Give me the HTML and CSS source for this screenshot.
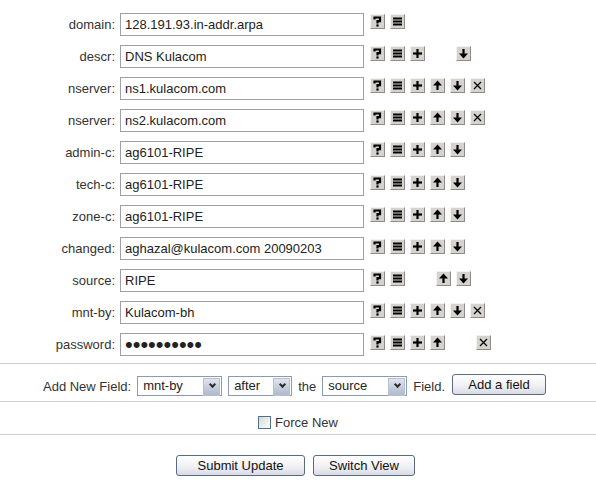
FILE: index.html
```html
<!DOCTYPE html>
<html lang="en">
  <head>
    <meta charset="utf-8" />
    <title>Update object - domain</title>
    <link rel="stylesheet" href="styles.css">
  </head>

  <body>
    <!-- glyphs for the small field buttons -->
    <svg class="defs" width="0" height="0" aria-hidden="true">
      <symbol id="i-help" viewBox="0 0 13 13">
        <path d="M3.5 4.5V2.5H9V6.2H6.5V8.5" fill="none" stroke="#000" stroke-width="2.2" />
        <rect x="5.4" y="9.4" width="2.2" height="2.2" />
      </symbol>
      <symbol id="i-list" viewBox="0 0 13 13">
        <rect x="2" y="2.5" width="9" height="2" />
        <rect x="2" y="5.5" width="9" height="2" />
        <rect x="2" y="8.5" width="9" height="2" />
      </symbol>
      <symbol id="i-add" viewBox="0 0 13 13">
        <rect x="5.4" y="2" width="2.2" height="9" />
        <rect x="2" y="5.4" width="9" height="2.2" />
      </symbol>
      <symbol id="i-up" viewBox="0 0 13 13">
        <polygon points="6.5,1.5 11,6.5 2,6.5" />
        <rect x="5.4" y="6" width="2.2" height="5" />
      </symbol>
      <symbol id="i-down" viewBox="0 0 13 13">
        <rect x="5.4" y="2" width="2.2" height="5" />
        <polygon points="2,6.5 11,6.5 6.5,11.5" />
      </symbol>
      <symbol id="i-del" viewBox="0 0 13 13">
        <path d="M3 3L10 10M10 3L3 10" fill="none" stroke="#000" stroke-width="1.3" />
      </symbol>
    </svg>

    <form class="object-form">
      <div class="fields">
        <div class="row">
          <label class="name">domain:</label>
          <input class="value" type="text" value="128.191.93.in-addr.arpa">
          <div class="tools">
            <span class="tool"><svg><use href="#i-help"/></svg></span>
            <span class="tool"><svg><use href="#i-list"/></svg></span>
          </div>
        </div>
        <div class="row">
          <label class="name">descr:</label>
          <input class="value" type="text" value="DNS Kulacom">
          <div class="tools">
            <span class="tool"><svg><use href="#i-help"/></svg></span>
            <span class="tool"><svg><use href="#i-list"/></svg></span>
            <span class="tool"><svg><use href="#i-add"/></svg></span>
            <span class="gap"></span>
            <span class="tool"><svg><use href="#i-down"/></svg></span>
          </div>
        </div>
        <div class="row">
          <label class="name">nserver:</label>
          <input class="value" type="text" value="ns1.kulacom.com">
          <div class="tools">
            <span class="tool"><svg><use href="#i-help"/></svg></span>
            <span class="tool"><svg><use href="#i-list"/></svg></span>
            <span class="tool"><svg><use href="#i-add"/></svg></span>
            <span class="tool"><svg><use href="#i-up"/></svg></span>
            <span class="tool"><svg><use href="#i-down"/></svg></span>
            <span class="tool"><svg><use href="#i-del"/></svg></span>
          </div>
        </div>
        <div class="row">
          <label class="name">nserver:</label>
          <input class="value" type="text" value="ns2.kulacom.com">
          <div class="tools">
            <span class="tool"><svg><use href="#i-help"/></svg></span>
            <span class="tool"><svg><use href="#i-list"/></svg></span>
            <span class="tool"><svg><use href="#i-add"/></svg></span>
            <span class="tool"><svg><use href="#i-up"/></svg></span>
            <span class="tool"><svg><use href="#i-down"/></svg></span>
            <span class="tool"><svg><use href="#i-del"/></svg></span>
          </div>
        </div>
        <div class="row">
          <label class="name">admin-c:</label>
          <input class="value" type="text" value="ag6101-RIPE">
          <div class="tools">
            <span class="tool"><svg><use href="#i-help"/></svg></span>
            <span class="tool"><svg><use href="#i-list"/></svg></span>
            <span class="tool"><svg><use href="#i-add"/></svg></span>
            <span class="tool"><svg><use href="#i-up"/></svg></span>
            <span class="tool"><svg><use href="#i-down"/></svg></span>
          </div>
        </div>
        <div class="row">
          <label class="name">tech-c:</label>
          <input class="value" type="text" value="ag6101-RIPE">
          <div class="tools">
            <span class="tool"><svg><use href="#i-help"/></svg></span>
            <span class="tool"><svg><use href="#i-list"/></svg></span>
            <span class="tool"><svg><use href="#i-add"/></svg></span>
            <span class="tool"><svg><use href="#i-up"/></svg></span>
            <span class="tool"><svg><use href="#i-down"/></svg></span>
          </div>
        </div>
        <div class="row">
          <label class="name">zone-c:</label>
          <input class="value" type="text" value="ag6101-RIPE">
          <div class="tools">
            <span class="tool"><svg><use href="#i-help"/></svg></span>
            <span class="tool"><svg><use href="#i-list"/></svg></span>
            <span class="tool"><svg><use href="#i-add"/></svg></span>
            <span class="tool"><svg><use href="#i-up"/></svg></span>
            <span class="tool"><svg><use href="#i-down"/></svg></span>
          </div>
        </div>
        <div class="row">
          <label class="name">changed:</label>
          <input class="value" type="text" value="aghazal@kulacom.com 20090203">
          <div class="tools">
            <span class="tool"><svg><use href="#i-help"/></svg></span>
            <span class="tool"><svg><use href="#i-list"/></svg></span>
            <span class="tool"><svg><use href="#i-add"/></svg></span>
            <span class="tool"><svg><use href="#i-up"/></svg></span>
            <span class="tool"><svg><use href="#i-down"/></svg></span>
          </div>
        </div>
        <div class="row">
          <label class="name">source:</label>
          <input class="value" type="text" value="RIPE">
          <div class="tools">
            <span class="tool"><svg><use href="#i-help"/></svg></span>
            <span class="tool"><svg><use href="#i-list"/></svg></span>
            <span class="gap"></span>
            <span class="tool"><svg><use href="#i-up"/></svg></span>
            <span class="tool"><svg><use href="#i-down"/></svg></span>
          </div>
        </div>
        <div class="row">
          <label class="name">mnt-by:</label>
          <input class="value" type="text" value="Kulacom-bh">
          <div class="tools">
            <span class="tool"><svg><use href="#i-help"/></svg></span>
            <span class="tool"><svg><use href="#i-list"/></svg></span>
            <span class="tool"><svg><use href="#i-add"/></svg></span>
            <span class="tool"><svg><use href="#i-up"/></svg></span>
            <span class="tool"><svg><use href="#i-down"/></svg></span>
            <span class="tool"><svg><use href="#i-del"/></svg></span>
          </div>
        </div>
        <div class="row">
          <label class="name">password:</label>
          <input class="value pw" type="password" value="secretpass">
          <div class="tools">
            <span class="tool"><svg><use href="#i-help"/></svg></span>
            <span class="tool"><svg><use href="#i-list"/></svg></span>
            <span class="tool"><svg><use href="#i-add"/></svg></span>
            <span class="tool"><svg><use href="#i-up"/></svg></span>
            <span class="gap"></span>
            <span class="tool"><svg><use href="#i-del"/></svg></span>
          </div>
        </div>
      </div>

      <!-- add a new attribute -->
      <div class="add-row">
        <span>Add New Field:</span>
        <span class="sel sel-field">
          <select><option>mnt-by</option></select>
        </span>
        <span class="sel sel-pos">
          <select><option>after</option></select>
        </span>
        <span>the</span>
        <span class="sel sel-field">
          <select><option>source</option></select>
        </span>
        <span>Field.</span>
        <button type="button" class="btn btn-add">Add a field</button>
      </div>

      <div class="force-row">
        <label><input type="checkbox" class="check"> Force New</label>
      </div>

      <div class="submit-row">
        <button type="button" class="btn btn-submit">Submit Update</button>
        <button type="button" class="btn btn-switch">Switch View</button>
      </div>
    </form>
  </body>
</html>
```

FILE: styles.css
```css
* {
  box-sizing: border-box;
}

body {
  margin: 0;
  font-family: "Liberation Sans", Arial, sans-serif;
  font-size: 13px;
  color: #333;
  background-color: white;
}

.defs {
  position: absolute;
}

.fields {
  padding-top: 8px;
}

.row {
  display: flex;
  align-items: center;
  height: 32.1px;
}

.name {
  width: 115px;
  text-align: right;
  margin-right: 5px;
}

.value {
  width: 244px;
  height: 23px;
  margin: 0;
  padding: 0 4px;
  border: 1px solid #a0a0a0;
  font-family: "Liberation Sans", Arial, sans-serif;
  font-size: 13px;
  color: #222;
}

.pw {
  font-size: 22px;
}

.tools {
  display: flex;
  gap: 5px;
  margin-left: 6px;
  margin-bottom: 5px;
}

.tool {
  display: block;
  width: 15px;
  height: 15px;
  background-color: #d6d3ce;
  border: 1px solid;
  border-color: #f4f3f0 #8e8c88 #8e8c88 #f4f3f0;
}

.tool svg {
  display: block;
  width: 13px;
  height: 13px;
}

.gap {
  width: 21px;
}

/* add field row */
.add-row {
  display: flex;
  align-items: center;
  justify-content: center;
  gap: 6px;
  height: 39px;
  padding-top: 7px;
  padding-right: 7px;
  border-top: 1px solid #cfcfcf;
  border-bottom: 1px solid #cfcfcf;
  margin-top: 2px;
}

.sel {
  position: relative;
  display: block;
}

.sel select {
  appearance: none;
  display: block;
  height: 20px;
  margin: 0;
  padding: 0 0 2px 5px;
  border: 1px solid #8a9bb3;
  background-color: white;
  font-family: "Liberation Sans", Arial, sans-serif;
  font-size: 13px;
  color: #222;
}

.sel-field select {
  width: 85px;
}

.sel-pos select {
  width: 64px;
}

/* the dropdown button drawn over the select */
.sel::after {
  content: "";
  position: absolute;
  top: 2px;
  right: 2px;
  width: 15px;
  height: 16px;
  background: linear-gradient(#dfe4ee, #aeb9cd);
  border: 1px solid #b7c1d4;
  pointer-events: none;
}

.sel::before {
  content: "";
  position: absolute;
  top: 6px;
  right: 7px;
  width: 3px;
  height: 3px;
  border-right: 2px solid #2a2a2a;
  border-bottom: 2px solid #2a2a2a;
  transform: rotate(45deg);
  z-index: 1;
  pointer-events: none;
}

.btn {
  height: 21px;
  margin: 0;
  padding: 0;
  border: 1px solid #5a6a82;
  border-radius: 3px;
  background: linear-gradient(#ffffff, #f1f1f4 55%, #d9dbe5);
  font-family: "Liberation Sans", Arial, sans-serif;
  font-size: 13px;
  color: #111;
}

.btn-add {
  width: 94px;
  margin-left: 1px;
  margin-bottom: 3px;
}

.btn-submit {
  width: 129px;
}

.btn-switch {
  width: 102px;
}

.force-row {
  display: flex;
  justify-content: center;
  align-items: center;
  height: 33px;
  padding-top: 9px;
  border-bottom: 1px solid #cfcfcf;
}

.force-row label {
  display: flex;
  align-items: center;
  gap: 4px;
}

.check {
  appearance: none;
  width: 13px;
  height: 13px;
  margin: 0;
  border: 1px solid #52708f;
  background: linear-gradient(135deg, #d8d8d2, #ffffff);
}

.submit-row {
  display: flex;
  justify-content: center;
  gap: 8px;
  padding-top: 20px;
  padding-right: 5px;
}
```
